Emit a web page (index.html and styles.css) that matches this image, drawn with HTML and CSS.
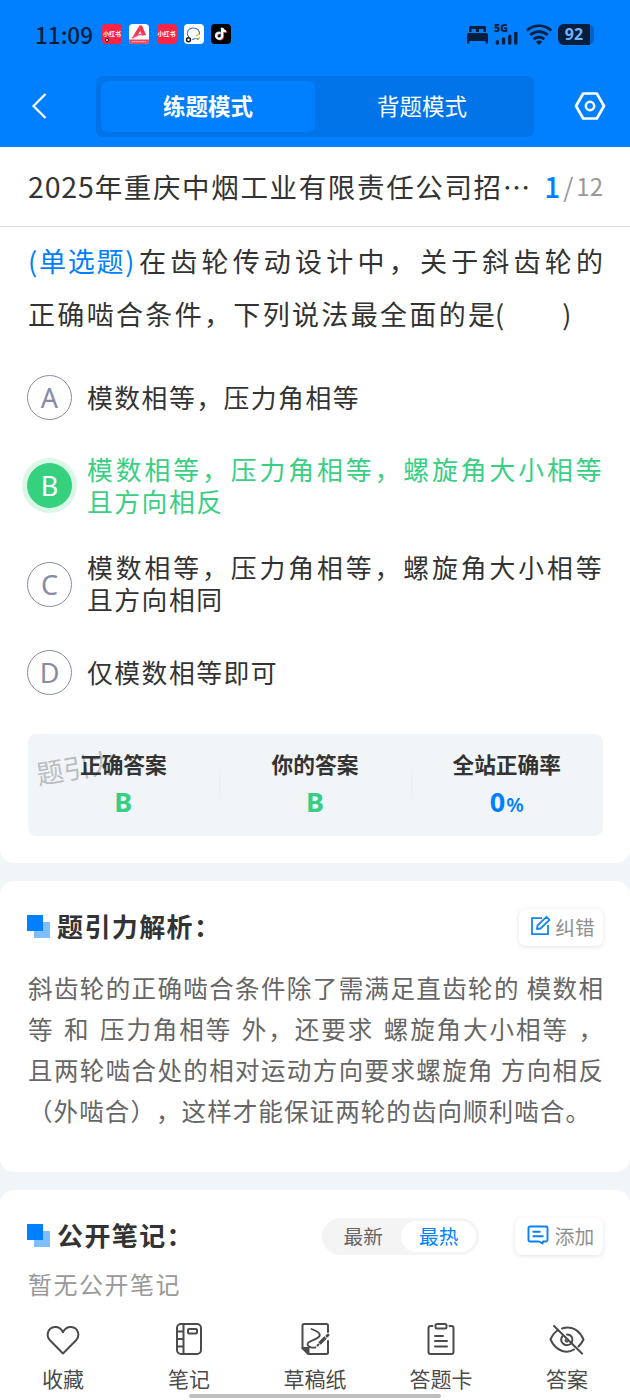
FILE: index.html
```html
<!DOCTYPE html>
<html lang="zh-CN">
<head>
<meta charset="utf-8">
<title>练题模式</title>
<link rel="stylesheet" href="styles.css">
</head>
<body>
<div class="phone">
  <header class="top">
    <div class="status">
      <span class="clock">11:09</span>
      <div class="apps">
        <span class="app red">小红书<i class="dot"></i></span>
        <span class="app"><svg viewBox="0 0 20 20"><rect width="20" height="20" rx="4" fill="#fff"/><path d="M3 14 10.500 1.500h2.500L17 11l-4 .8L11.300 7 8.500 11z" fill="#f0394f"/><path d="M3 14l6-3 5-1" stroke="#f58" stroke-width="1.500" fill="none"/><path d="M0 15.500h20v.5a4 4 0 0 1-4 4H4a4 4 0 0 1-4-4z" fill="#e8495c"/><path d="M3 17.700h14" stroke="#f9b0b8" stroke-width="1.300" stroke-dasharray="1.500 .6"/></svg></span>
        <span class="app red">小红书</span>
        <span class="app"><svg viewBox="0 0 20 20"><rect width="20" height="20" rx="4" fill="#fff"/><path d="M5 13.500C1.500 9 4 4 9.500 4c4 0 6.500 3 6 6.500M8 15.500l4-1" fill="none" stroke="#3c78c8" stroke-width="1.100"/><path d="M12 12l3-2M14 15l2-2" stroke="#e9b83a" stroke-width="1.400"/><path d="M12.500 14.500l2 1" stroke="#45ad65" stroke-width="1.400"/><circle cx="4.500" cy="15.700" r="2" fill="#fff" stroke="#111" stroke-width="1.400"/></svg></span>
        <span class="app"><svg viewBox="0 0 20 20"><rect width="20" height="20" rx="4" fill="#000"/><g fill="none" stroke-width="2"><path d="M9.800 9.200a3 3 0 1 0 1.700 2.900V4c.3 2 1.700 3.300 3.700 3.500" stroke="#f33358" transform="translate(.6 .5)"/><path d="M9.300 9a3 3 0 1 0 1.700 2.900V4c.3 2 1.700 3.300 3.700 3.500" stroke="#3fe0e3" transform="translate(-.3 -.2)"/><path d="M9.500 9.100a3 3 0 1 0 1.700 2.900V3.800c.3 2 1.700 3.300 3.700 3.500" stroke="#fff"/></g></svg></span>
      </div>
      <div class="signals">
        <svg class="bed" viewBox="0 0 21 19"><path d="M2 7V2.500Q2 1 3.500 1h14Q19 1 19 2.500V7h-2.500V4h-4.500V7h-3V4H4.500V7z" fill="#071e3d"/><path d="M2 8h17q2 0 2 2v8.500h-2.300V16H2.300v2.500H0V10q0-2 2-2z" fill="#071e3d"/></svg>
        <div class="cell"><b>5G</b><svg viewBox="0 0 25 14"><path d="M2.700 10.500v1.500M9.300 7.500v4.500M16 4.500v7.500M22.500 1v11" stroke="#071e3d" stroke-width="3.600" stroke-linecap="round"/></svg></div>
        <svg class="wifi" viewBox="0 0 26 21"><g fill="none" stroke="#071e3d" stroke-width="2.700"><path d="M.8 6.500a18 18 0 0 1 24.400 0"/><path d="M4.200 11a13 13 0 0 1 17.600 0"/><path d="M7.600 15.200a8 8 0 0 1 10.800 0"/></g><path d="M9.700 17.700q3.300-2.600 6.600 0L13 21z" fill="#071e3d"/></svg>
        <span class="battery"><span class="level">92</span></span>
      </div>
    </div>
    <div class="modes">
      <svg class="back" viewBox="0 0 16 28"><path d="M14.500 2 2.500 14l12 12" fill="none" stroke="#fff" stroke-width="2.200"/></svg>
      <div class="switch"><span class="mode on">练题模式</span><span class="mode">背题模式</span></div>
      <svg class="gear" viewBox="0 0 32 30"><path d="M9.200 2.500h13.600L30 15l-7.200 12.500H9.200L2 15z" fill="none" stroke="#fff" stroke-width="2.700" stroke-linejoin="round"/><circle cx="16" cy="15" r="4.200" fill="none" stroke="#fff" stroke-width="2.500"/></svg>
    </div>
  </header>

  <section class="card question">
    <div class="titlebar"><span class="title"><span class="year">2025</span>年重庆中烟工业有限责任公司招⋯</span><span class="progress"><b>1</b><i>/</i>12</span></div>
    <div class="stem">
      <div class="line"><span class="kind">(单选题)</span><span class="grow">在齿轮传动设计中，关于斜齿轮的</span></div>
      <div class="line second"><span class="words">正确啮合条件，下列说法最全面的是</span><span>(</span><span>)</span></div>
    </div>
    <div class="options">
      <div class="option"><span class="key">A</span><p class="short">模数相等，压力角相等</p></div>
      <div class="option right"><span class="key">B</span><p>模数相等，压力角相等，螺旋角大小相等且方向相反</p></div>
      <div class="option"><span class="key">C</span><p>模数相等，压力角相等，螺旋角大小相等且方向相同</p></div>
      <div class="option"><span class="key">D</span><p class="short">仅模数相等即可</p></div>
    </div>
    <div class="result">
      <span class="mark">题引力</span>
      <div class="cellbox"><span class="label">正确答案</span><b>B</b></div>
      <div class="cellbox"><span class="label">你的答案</span><b>B</b></div>
      <div class="cellbox"><span class="label">全站正确率</span><b class="rate">0<small>%</small></b></div>
    </div>
  </section>

  <section class="card analysis">
    <div class="head"><i class="squares"></i><h2>题引力解析：</h2>
      <span class="chip"><svg class="edit" viewBox="0 0 22 22"><g fill="none" stroke="#1585f5" stroke-width="1.800"><path d="M12 3.200H2v16h16V10"/><path d="M16.500 1.800 19.500 4.800 10.500 13.500 7 14 7.500 10.500z" stroke-linejoin="round"/></g></svg>纠错</span>
    </div>
    <div class="text">
      <span>斜齿轮的正确啮合条件除了需满足直齿轮的 模数相</span>
      <span class="wide">等 和 压力角相等 外，还要求 螺旋角大小相等 ，</span>
      <span>且两轮啮合处的相对运动方向要求螺旋角 方向相反</span>
      <span class="last">（外啮合），这样才能保证两轮的齿向顺利啮合。</span>
    </div>
  </section>

  <section class="card notes">
    <div class="head"><i class="squares"></i><h2>公开笔记：</h2>
      <span class="sort"><span>最新</span><span class="hot">最热</span></span>
      <span class="chip"><svg class="say" viewBox="0 0 22 20"><path d="M3 1.500h16q1.500 0 1.500 1.500v12q0 1.500-1.500 1.500h-3l-.5 2-3.500-2H3Q1.500 16.500 1.500 15V3Q1.500 1.500 3 1.500zM5.500 6.800h8M5.500 11.200h11" fill="none" stroke="#0a80f7" stroke-width="1.900" stroke-linejoin="round"/></svg>添加</span>
    </div>
    <p class="empty">暂无公开笔记</p>
  </section>

  <nav class="tabs">
    <div class="tab"><svg viewBox="0 0 34 34"><path d="M17 31.500 3.900 18.300C-.2 14.200 1.500 5.500 8.800 5c3.800-.2 6.500 1.600 8.200 5.200C18.700 6.600 21.400 4.800 25.200 5c7.300.5 9 9.200 4.900 13.300z"/></svg>收藏</div>
    <div class="tab"><svg viewBox="0 0 34 34"><rect x="5" y="2" width="24" height="30" rx="4"/><path d="M11.500 2v30M5 9.500h6.500M5 17h6.500M5 24.500h6.500"/><rect x="16" y="7" width="9" height="4.500" rx="1"/></svg>笔记</div>
    <div class="tab"><svg viewBox="0 0 34 34"><path d="M30 10V3.500Q30 2 28.500 2H6Q4.500 2 4.500 3.500V26l6 6h18q1.500 0 1.500-1.500V19"/><path d="M13.500 7c5 2 9.500 4 8 7-2 4-11.500 4.500-12 8 0 3 4 4 8 3.500" stroke-width="1.800"/><path d="M4.500 26h6v6z" fill="#4b4b4b"/><path d="m21.500 21.500 6-6" stroke-width="3.400" stroke-linecap="butt"/><path d="m29 14 1-1" stroke-width="3"/><path d="m19.500 23.500 1-1" stroke-width="2"/></svg>草稿纸</div>
    <div class="tab"><svg viewBox="0 0 34 34"><path d="M8.500 4h-2Q4.500 4 4.500 6v24q0 2 2 2h21q2 0 2-2V6q0-2-2-2h-2M11 14h8M11 19h12M11 24.500h12"/><rect x="11.500" y="2" width="11" height="4.500" rx="1.500"/></svg>答题卡</div>
    <div class="tab"><svg class="eye" viewBox="0 0 36 34"><path d="M8.500 8.500C5.500 10.500 3 14 1.500 17.500 7 29.500 18 32 25 27.500M13 6.500c10-3 17.500 2 21.500 11-1.300 2.800-3 5-5 7M13.500 14c-4 6 2.500 11.500 8 8M18 12.500c4.500 0 6.500 4 5 7.500M16.500 18q.5 2 2 1.500"/><path d="m5 4 28 27.500"/></svg>答案</div>
    <i class="homebar"></i>
  </nav>
</div>
</body>
</html>
```
FILE: styles.css
```css
* { box-sizing: border-box; }
body {
  margin: 0;
  font-family: "Noto Sans CJK SC", sans-serif;
  color: #333;
  background: #f1f5f8;
  text-spacing-trim: space-all;
}
i { font-style: normal; }
svg { display: block; flex: none; }
.phone { width: 630px; height: 1400px; display: flex; flex-direction: column; overflow: hidden; position: relative; }

.top { height: 147px; flex: none; background: #0080ff; }
.status { height: 68px; display: flex; align-items: center; padding: 0 36px 0 35px; color: #071e3d; }
.clock { font: 500 22.500px/30px "Noto Sans CJK SC", sans-serif; width: 67px; white-space: nowrap; }
.apps { display: flex; gap: 7.300px; }
.app { width: 20px; height: 20px; border-radius: 4px; position: relative; }
.red { background: #fb2346; color: #fff; font-size: 6px; line-height: 20px; text-align: center; font-weight: 700; white-space: nowrap; }
.dot { position: absolute; left: 3px; bottom: 2px; width: 4px; height: 4px; border-radius: 50%; background: #fff; border: 1px solid #111; }
.signals { margin-left: auto; display: flex; align-items: center; height: 24px; }
.bed { width: 21px; height: 19px; margin-right: 6px; }
.cell { width: 25px; height: 21px; display: flex; flex-direction: column; justify-content: space-between; margin-right: 7px; }
.cell b { font: 800 10.500px/8px "Open Sans", sans-serif; }
.cell svg { width: 25px; height: 13px; }
.wifi { width: 26px; height: 21px; margin-right: 6px; }
.battery { width: 36px; height: 21px; border-radius: 6px; background: #0761c2; overflow: hidden; }
.level { display: block; width: 32px; height: 21px; background: #071e3d; color: #72b4fb; font: 700 16px/21px "Noto Sans", sans-serif; text-align: center; }

.modes { height: 79px; display: flex; align-items: flex-start; padding: 8px 24px 0 31px; }
.back { width: 16px; height: 28px; margin-top: 16px; }
.switch { width: 438px; height: 61px; margin-left: 49px; border-radius: 7px; background: #0074e8; padding: 5px; display: flex; }
.mode { flex: 1; height: 51px; border-radius: 7px; color: #fff; font-size: 22.500px; line-height: 49px; text-align: center; }
.mode.on { background: #0080ff; font-weight: 700; }
.gear { width: 32px; height: 30px; margin: 15px 0 0 auto; }

.card { background: #fff; border-radius: 14px; flex: none; }
.question { height: 716px; border-radius: 0 0 14px 14px; }
.titlebar { height: 80px; border-bottom: 1px solid #ddd; padding: 0 27px 0 28px; display: flex; align-items: center; justify-content: space-between; line-height: 76px; padding-bottom: 2px; }
.title { font-size: 27.500px; letter-spacing: 1.650px; white-space: nowrap; width: 506px; }
.year { font-size: 28.500px; letter-spacing: .85px; }
.progress { font-size: 24px; color: #999; display: flex; align-items: center; white-space: nowrap; }
.progress b { font-size: 28px; font-weight: 500; color: #0080ff; }
.progress i { font-size: 26px; margin: 0 3px; }
.stem { padding: 8px 27px 0 28px; font-size: 27px; }
.line { height: 52.500px; line-height: 52.500px; display: flex; white-space: nowrap; }
.kind { color: #0080ff; width: 111px; letter-spacing: 1.800px; }
.grow { flex: 1; text-align-last: justify; }
.second .words { width: 467px; text-align-last: justify; }
.second span:last-child { margin-left: 58px; }
.options { padding: 35px 27px 0; display: flex; flex-direction: column; gap: 34.500px; }
.option { display: flex; align-items: center; height: 44px; }
.option:nth-child(2), .option:nth-child(3) { height: 64px; }
.option p { margin: -2px 0 0; flex: 1; font-size: 25.800px; line-height: 32px; letter-spacing: 1.500px; text-align: justify; }
.option .short { margin-top: -1px; }
.key { width: 45px; height: 45px; margin-right: 15px; border: 1.500px solid #888ca3; border-radius: 50%; color: #888ca3; font: 27px/43px "Noto Sans", sans-serif; text-align: center; }
.right { color: #38cf83; }
.right .key { background: #36d17f; border-color: #36d17f; color: #fff; box-shadow: 0 0 0 5px #dbf7e8; }
.result { position: relative; margin: 39px 27.500px 0; height: 102px; border-radius: 8px; background: #f1f5f8; display: grid; grid-template-columns: repeat(3, 1fr); isolation: isolate; }
.cellbox { display: flex; flex-direction: column; align-items: center; padding-top: 14px; position: relative; }
.cellbox + .cellbox { background: linear-gradient(#e9eef200, #e7ecf0, #e9eef200) 0 30px / 1px 44px no-repeat; }
.label { font-size: 21.700px; line-height: 32px; font-weight: 700; }
.cellbox b { font: 700 27px/43px "Noto Sans", sans-serif; color: #38cf83; }
.cellbox b.rate { color: #0080ff; }
.rate small { font-size: 20px; font-weight: 600; margin-left: 1px; }
.mark { position: absolute; left: 8px; top: 14px; font-size: 27px; line-height: 38px; color: #bbbec1; transform: rotate(-10deg); z-index: -1; }

.analysis { margin-top: 18px; height: 291px; padding: 27px 27px 0; }
.head { display: flex; align-items: center; height: 38px; }
.squares { width: 23px; height: 23px; margin: -2px 7px 0 0; background: linear-gradient(#0080ff, #0080ff) 0 0 / 16px 16px no-repeat, linear-gradient(#80bfff, #80bfff) 7px 7px / 16px 16px no-repeat; }
h2 { margin: -2px 0 0; font-size: 26px; letter-spacing: 1.400px; line-height: 38px; font-weight: 700; white-space: nowrap; }
.chip { margin-left: auto; height: 37px; width: 84px; border-radius: 7px; background: #fff; box-shadow: 0 1px 5px #0000001c; display: flex; align-items: center; justify-content: center; gap: 3px; padding-left: 3px; font-size: 19.700px; line-height: 35px; padding-bottom: 2px; color: #909090; }
.edit { width: 22px; height: 22px; }
.text { margin: 21px 0 0 1px; font-size: 24.500px; line-height: 41px; color: #666; }
.text span { display: block; white-space: nowrap; text-align-last: justify; }
.text .wide { word-spacing: 2px; }
.text .last { width: 562px; }

.notes { margin-top: 18px; height: 120px; border-radius: 14px 14px 0 0; padding: 27px 27px 0; }
.sort { margin-left: auto; width: 157px; height: 37px; border-radius: 19px; background: #f4f4f4; display: flex; padding: 3px; font-size: 19.700px; line-height: 29px; color: #666; text-align: center; }
.sort span { flex: 1; padding-left: 1px; }
.sort .hot { background: #fff; border-radius: 16px; color: #0080ff; }
.notes .chip { margin-left: 36px; width: 88px; gap: 6px; }
.say { width: 22px; height: 20px; }
.empty { margin: 11px 0 0 1px; font-size: 24px; letter-spacing: 1.500px; line-height: 36px; color: #999; }
.tabs { height: 90px; flex: none; background: #fff; display: grid; grid-template-columns: repeat(5, 126px); position: relative; padding-top: 12px; }
.tab { display: flex; flex-direction: column; align-items: center; font-size: 21px; line-height: 38px; color: #4b4b4b; white-space: nowrap; gap: 3px; }
.tab svg { width: 34px; height: 34px; fill: none; stroke: #4b4b4b; stroke-width: 2; stroke-linejoin: round; stroke-linecap: round; }
.tab .eye { width: 36px; }
.homebar { position: absolute; left: 189px; top: 84px; width: 252px; height: 4px; border-radius: 2px; background: #bfbfbf; }
```
